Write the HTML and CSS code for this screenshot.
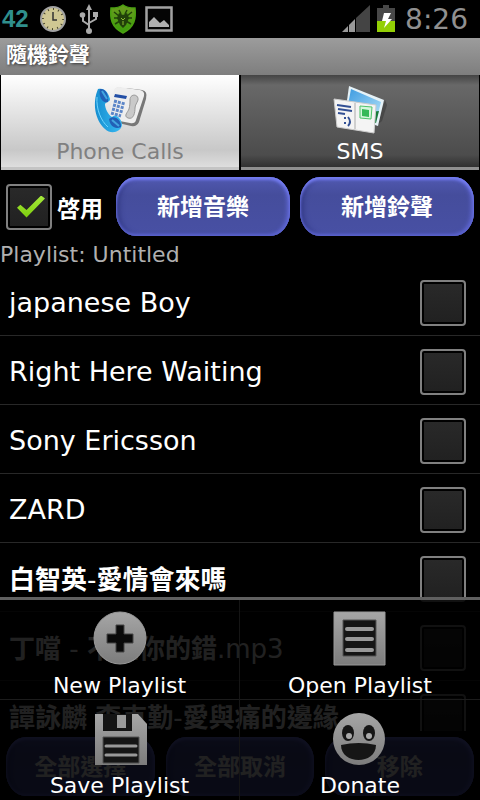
FILE: index.html
```
<!DOCTYPE html>
<html lang="zh-Hant">
	<head>
		<meta charset="utf-8">
		<meta name="viewport" content="width=device-width, initial-scale=1">
		<title>隨機鈴聲</title>
		<link rel="stylesheet" href="styles.css">
	</head>
	<body>

		<div class="status">
			<span class="level">42</span>
			<svg width="28" height="28" viewBox="0 0 28 28">
				<circle cx="14" cy="14" r="12" fill="#cfc793" stroke="#a3a3a3" stroke-width="2"/>
				<circle cx="14" cy="14" r="10" fill="none" stroke="#45432e" stroke-width="2" stroke-dasharray="1 4.2"/>
				<path d="M14 7v8h4" fill="none" stroke="#333" stroke-width="1.5"/>
			</svg>
			<svg class="usb" width="20" height="30" viewBox="0 0 20 30">
				<path d="M10 4v21M10 21l-6-4v-6M10 19l7-4V10" fill="none" stroke="#aaa" stroke-width="2"/>
				<path d="M10 0l3 6H7z" fill="#aaa"/>
				<circle cx="3.500" cy="11" r="2.800" fill="#aaa"/>
				<path d="M14 8h5v5h-5z" fill="#aaa"/>
				<circle cx="10" cy="27" r="3" fill="#aaa"/>
			</svg>
			<svg width="28" height="30" viewBox="0 0 28 30">
				<defs>
					<linearGradient id="shield" x1="0" y1="0" x2="0" y2="1">
						<stop offset="0" stop-color="#6c9b20"/>
						<stop offset="1" stop-color="#3a9c0a"/>
					</linearGradient>
				</defs>
				<path d="M14 1c4 3 8 3 12 3 1 10 0 19-12 25C2 23 1 14 2 4c4 0 8 0 12-3z" fill="url(#shield)" stroke="#4aa010" stroke-width="1.500"/>
				<path d="M10 9l4 2 4-2 2 5-3 7-3 3-3-3-3-7z" fill="#21400a"/>
				<path d="M5 8l5 4M5 14l5 0M6 20l5-3M23 8l-5 4M23 14l-5 0M22 20l-5-3M10 6l2 4M18 6l-2 4" stroke="#21400a" stroke-width="1.500"/>
				<path d="M12 14l2 2 2-2M14 17v4" fill="none" stroke="#8bbb30"/>
			</svg>
			<svg class="photo" width="28" height="26" viewBox="0 0 28 26">
				<path d="M1.500 1.500h25v23h-25z" fill="#050505" stroke="#a2a2a2" stroke-width="2.500"/>
				<path d="M4 21v-5l5-5 6 6 4-3 5 5v2z" fill="#b0b0b0"/>
			</svg>
			<span class="space"></span>
			<svg width="28" height="28" viewBox="0 0 28 28">
				<path d="M0 27L6 21v6z" fill="#999"/>
				<path d="M7 20l6-6v13H7z" fill="#999"/>
				<path d="M14 13L28 0v27H14z" fill="#444"/>
			</svg>
			<svg class="battery" width="18" height="28" viewBox="0 0 18 28">
				<path d="M6 0h6v3h6v13H0V3h6z" fill="#484848"/>
				<path d="M0 16h18v11H0z" fill="#93cf05"/>
				<path d="M7 8h7l-3 6h4L7 23l2-7H5z" fill="#fff"/>
			</svg>
			<span class="clock">8:26</span>
		</div>

		<h1 class="title">隨機鈴聲</h1>

		<div class="tabs">
			<button class="tab active">
				<svg width="56" height="50" viewBox="0 0 56 50">
					<defs>
						<linearGradient id="handset" x1="0" y1="0" x2="1" y2="0">
							<stop offset="0" stop-color="#168ed0"/>
							<stop offset="1" stop-color="#39baf2"/>
						</linearGradient>
					</defs>
					<path d="M24 3Q27 2 50 5Q56 6 54 14L47 37Q45 42 39 41L18 36z" fill="#777"/>
					<path d="M22 5Q23 2 27 2L48 5Q53 6 52 11L44 35Q43 39 38 38L17 34z" fill="#eee"/>
					<path d="M23 9l12 2-1 3-12-2z" fill="#234fa6"/>
					<path d="M22 16l11 3M21 20l11 3M20 24l11 3M19 28l10 3" stroke="#5c86c8" stroke-width="3" stroke-dasharray="3 1"/>
					<path d="M38 15c0-7 9-6 8 0-1 3-3 5-3 8 0 4-1 12-7 10-5-2 0-6 1-9 1-4 1-6 1-9z" fill="#c9c9c9" stroke="#999"/>
					<path d="M6 4C13 2 17 9 18 14c0 4-5 2-5 6 1 6 4 10 7 12 4-4 10 2 10 8-1 7-11 10-17 4C3 35 0 18 6 4z" fill="url(#handset)"/>
					<path d="M8 4c5-1 9 5 8 13-5 2-10-5-8-13z" fill="#2260b6"/>
					<path d="M17 34c5-5 13 1 12 8-6 3-11-1-12-8z" fill="#2260b6"/>
					<path d="M10 6l5 8M20 35l7 6" stroke="#43a6e0" stroke-width="2"/>
					<path d="M5 12c-1 12 4 24 11 30" fill="none" stroke="#6fd5ff"/>
				</svg>
				Phone Calls
			</button>
			<button class="tab">
				<svg width="56" height="50" viewBox="0 0 56 50">
					<defs>
						<linearGradient id="sky" x1="0" y1="0" x2="1" y2="1">
							<stop offset="0" stop-color="#3b9ae0"/>
							<stop offset="1" stop-color="#b7e4fa"/>
						</linearGradient>
					</defs>
					<path d="M45 40l8-25 2 5-5 16z" fill="#333" opacity=".5"/>
					<path d="M17 1L52 15 46 41 13 30z" fill="#e6f2f7"/>
					<path d="M19 4l30 13-5 20-29-12z" fill="url(#sky)"/>
					<path d="M38 27l9-1-3 12-6-1z" fill="#197b3a"/>
					<path d="M2 14l42 6-2 28-37-6z" fill="#f4f4f4" stroke="#ccc"/>
					<path d="M23 18v26" stroke="#aaa"/>
					<path d="M5 20l14 2M6 24l14 2M6 28l7 1" stroke="#314f94" stroke-width="2"/>
					<path d="M13 32v2M13 37v2M16 32q4 5 0 9" fill="none" stroke="#314f94" stroke-width="2"/>
					<path d="M28 21l12 1-1 12-11-1z" fill="#d6f6dc" stroke="#4ec46a"/>
					<path d="M30 24l7 1v7l-7-1z" fill="#35b957"/>
				</svg>
				SMS
			</button>
		</div>

		<div class="toolbar">
			<label class="enable"><input type="checkbox" class="check" checked>啓用</label>
			<button class="blue">新增音樂</button>
			<button class="blue">新增鈴聲</button>
		</div>

		<p class="current">Playlist: Untitled</p>

		<div class="songs">
			<label class="song"><span>japanese Boy</span><input type="checkbox" class="check"></label>
			<label class="song"><span>Right Here Waiting</span><input type="checkbox" class="check"></label>
			<label class="song"><span>Sony Ericsson</span><input type="checkbox" class="check"></label>
			<label class="song"><span>ZARD</span><input type="checkbox" class="check"></label>
			<label class="song"><span class="han"><b>白智英</b>-<b>愛情會來嗎</b></span><input type="checkbox" class="check"></label>
			<label class="song"><span class="han"><b>丁噹</b> - <b>不是你的錯</b>.mp3</span><input type="checkbox" class="check"></label>
			<label class="song"><span class="han"><b>譚詠麟</b> <b>李克勤</b>-<b>愛與痛的邊緣</b></span><input type="checkbox" class="check"></label>
		</div>

		<div class="actions">
			<button class="blue">全部選擇</button>
			<button class="blue">全部取消</button>
			<button class="blue">移除</button>
		</div>

		<!-- options menu, opens over the list -->
		<div class="menu">
			<button class="item">
				<svg width="56" height="56" viewBox="0 0 56 56">
					<defs>
						<linearGradient id="metal" x1="0" y1="0" x2="0" y2="1">
							<stop offset="0" stop-color="#a6a6a6"/>
							<stop offset="1" stop-color="#7c7c7c"/>
						</linearGradient>
					</defs>
					<circle cx="28" cy="28" r="26" fill="url(#metal)" stroke="#999"/>
					<path d="M24 15h8v9h9v9h-9v9h-8v-9h-9v-9h9z" fill="#0a0a0a" stroke="#444"/>
				</svg>
				New Playlist
			</button>
			<button class="item">
				<svg width="56" height="56" viewBox="0 0 56 56">
					<path d="M2 2h51v53H2z" fill="url(#metal)" stroke="#999"/>
					<path d="M11 10h33v36H11z" fill="#151515" stroke="#555"/>
					<path d="M15 19h25M15 29h25M15 40h25" stroke="#999" stroke-width="4" stroke-linecap="round"/>
				</svg>
				Open Playlist
			</button>
			<button class="item">
				<svg width="56" height="56" viewBox="0 0 56 56">
					<path d="M3 4h43l9 10v41H3z" fill="url(#metal)"/>
					<path d="M11 4h29v17H11z" fill="#141414"/>
					<path d="M25 5h9v13h-9z" fill="#999"/>
					<path d="M11 27h36v26H11z" fill="#151515" stroke="#555"/>
					<path d="M14 36h30M14 45h30" stroke="#999" stroke-width="3" stroke-linecap="round"/>
				</svg>
				Save Playlist
			</button>
			<button class="item">
				<svg width="56" height="56" viewBox="0 0 56 56">
					<circle cx="27" cy="29" r="26" fill="url(#metal)"/>
					<ellipse cx="16" cy="23" rx="6" ry="8" fill="#161616"/>
					<ellipse cx="37" cy="23" rx="6" ry="8" fill="#161616"/>
					<circle cx="17" cy="26" r="3" fill="#aaa"/>
					<circle cx="37" cy="26" r="3" fill="#aaa"/>
					<path d="M9 35q18-4 35 0c0 20-35 20-35 0z" fill="#161616"/>
				</svg>
				Donate
			</button>
		</div>

	</body>
</html>
```

FILE: styles.css
```
* {
	box-sizing: border-box;
}

body {
	margin: 0;
	height: 100vh;
	display: flex;
	flex-direction: column;
	position: relative;
	overflow: hidden;
	background: #000;
	color: #fff;
	font-family: "DejaVu Sans", "Noto Sans CJK TC", sans-serif;
}

button {
	border: 0;
	padding: 0;
	margin: 0;
	background: none;
	color: inherit;
	font: inherit;
}

svg {
	display: block;
	flex: none;
}

.status {
	height: 38px;
	flex: none;
	display: flex;
	align-items: center;
	gap: 10px;
	padding: 0 12px 0 2px;
}

.level {
	color: #2f8f8c;
	font: bold 24px "Liberation Sans", sans-serif;
}

.usb {
	margin-left: 2px;
}

.photo {
	margin-left: -2px;
}

.battery {
	margin-left: -3px;
}

.space {
	flex: 1;
}

.clock {
	color: #909090;
	font-size: 28px;
}

.title {
	margin: 0;
	height: 37px;
	flex: none;
	padding-left: 6px;
	background: linear-gradient(#9c9c9c, #7e7e7e);
	font: bold 21px/30px "Noto Sans CJK TC", sans-serif;
	text-shadow: 1px 1px 3px #333;
}

.tabs {
	flex: none;
	display: flex;
}

.tab {
	flex: 1;
	height: 95px;
	display: flex;
	flex-direction: column;
	align-items: center;
	padding-top: 10px;
	border: solid #000;
	border-width: 0 1px;
	box-shadow: inset 0 -3px #8f8f8f;
	background: linear-gradient(#444, #686868 10px, #4c4c4c 80px, #303030 92px);
	font-size: 22px;
	line-height: 34px;
}

.tab.active {
	background: linear-gradient(#fff, #c8c8c8 75px, #dedede 92px);
	box-shadow: inset 0 -3px #c4c4c4;
	color: #808080;
}

.toolbar {
	flex: none;
	height: 73px;
	display: flex;
	align-items: center;
	gap: 10px;
	padding: 0 6px;
}

.enable {
	display: flex;
	align-items: center;
	gap: 5px;
	margin-right: 3px;
	font: bold 23px "Noto Sans CJK TC", sans-serif;
}

.check {
	appearance: none;
	flex: none;
	width: 46px;
	height: 46px;
	margin: 0;
	padding: 2px;
	border: 2px solid #808080;
	border-radius: 4px;
	background: linear-gradient(#292929, #212121) content-box;
}

.check:checked::before {
	content: "";
	display: block;
	width: 28px;
	height: 22px;
	margin: 8px 7px;
	background: linear-gradient(#a6ea3c, #7ccc0c);
	clip-path: polygon(0 56%, 12% 42%, 34% 66%, 86% 0, 100% 14%, 34% 100%);
}

.blue {
	flex: 1;
	height: 59px;
	padding-bottom: 3px;
	border-radius: 20px / 24px;
	background: linear-gradient(#5159b0, #454d9c 30%, #4850a4);
	box-shadow: inset 0 3px 3px #747cf0, inset 0 -2px 3px #5a62cc, inset -3px 0 4px #6068d4, inset 4px 0 5px #353c88;
	font: bold 23px "Noto Sans CJK TC", sans-serif;
}

.current {
	flex: none;
	margin: 0;
	color: #b0b0b0;
	font-size: 22px;
	line-height: 24px;
}

.songs {
	flex: 1;
	min-height: 0;
	overflow: hidden;
}

.song {
	height: 69px;
	display: flex;
	align-items: center;
	justify-content: space-between;
	padding: 3px 14px 0 9px;
	border-bottom: 1px solid #282828;
	font-size: 27px;
	line-height: 36px;
}

.han {
	font-size: 26px;
}

.han b {
	font-family: "Noto Sans CJK TC", sans-serif;
}

.actions {
	flex: none;
	display: flex;
	gap: 11px;
	padding: 6px 6px 4px;
}

.menu {
	position: absolute;
	left: 0;
	right: 0;
	bottom: 0;
	display: grid;
	grid-template-columns: 1fr 1fr;
	border-top: 3px solid #606060;
	background: rgba(0, 0, 0, .87);
}

.item {
	height: 100px;
	display: flex;
	flex-direction: column;
	align-items: center;
	gap: 8px;
	padding-top: 10px;
	font-size: 22px;
	line-height: 24px;
}

.item:nth-child(odd) {
	border-right: 1px solid #151515;
}

.item:nth-child(-n+2) {
	border-bottom: 1px solid #1c1c1c;
}
```
